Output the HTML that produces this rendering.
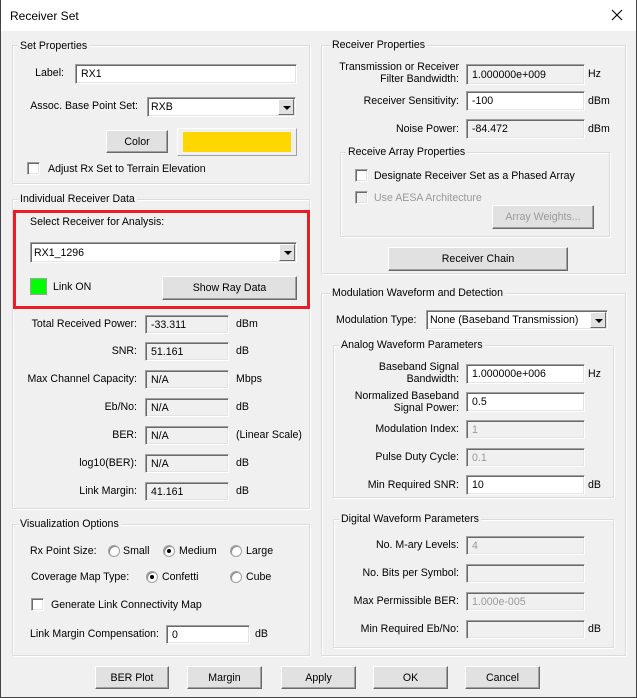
<!DOCTYPE html>
<html><head><style>
*{box-sizing:border-box;margin:0;padding:0}
body{width:637px;height:698px;background:#f0f0f0;font-family:"Liberation Sans",sans-serif;font-size:10.6px;color:#000;position:relative;overflow:hidden}
.frame{position:absolute;left:0;top:0;width:637px;height:698px;border:1px solid #444;border-top:none;pointer-events:none}
.title{position:absolute;left:0;top:0;width:637px;height:31px;background:#fff}
.t{position:absolute;white-space:nowrap;line-height:12px;transform:translateY(-6px)}
.r{position:absolute;white-space:nowrap;line-height:12px;transform:translateY(-6px);text-align:right}
.g{position:absolute;border:1px solid #dcdcdc;box-shadow:inset 1px 1px #fff,1px 1px #fff}
.gl{position:absolute;background:#f0f0f0;padding:0 2px;white-space:nowrap;line-height:12px;transform:translateY(-6px)}
.e{position:absolute;background:#fff;border-top:1px solid #a0a0a0;border-left:1px solid #a0a0a0;border-bottom:1px solid #fff;border-right:1px solid #fff;box-shadow:inset 1px 1px #696969,inset -1px -1px #e3e3e3;padding:0 0 0 5px;display:flex;align-items:center;white-space:nowrap}
.ro{background:#f0f0f0}
.dis{color:#9a9a9a}
.b{position:absolute;background:#e1e1e1;border-top:1px solid #fff;border-left:1px solid #fff;border-right:1px solid #696969;border-bottom:1px solid #696969;box-shadow:inset -1px -1px #a0a0a0;display:flex;align-items:center;justify-content:center;white-space:nowrap}
.cb{position:absolute;width:13px;height:13px;background:#fff;border-top:1px solid #a0a0a0;border-left:1px solid #a0a0a0;border-bottom:1px solid #fff;border-right:1px solid #fff;box-shadow:inset 1px 1px #696969,inset -1px -1px #e3e3e3}
.rd{position:absolute;width:12px;height:12px;border-radius:50%;background:#fff;border:1px solid #a0a0a0;box-shadow:inset 1px 1px #888}
.rd.on::after{content:"";position:absolute;left:3px;top:3px;width:4px;height:4px;border-radius:50%;background:#000}
.dd{position:absolute;right:1px;top:1px;bottom:1px;width:16px;background:#e1e1e1;border-top:1px solid #fff;border-left:1px solid #fff;border-right:1px solid #696969;border-bottom:1px solid #696969}
.dd::after{content:"";position:absolute;left:4px;top:6px;border-left:4px solid transparent;border-right:4px solid transparent;border-top:4px solid #000}
</style></head><body>
<div class="title"></div>
<div class="t" style="left:10px;top:16px;font-size:12px">Receiver Set</div>
<svg style="position:absolute;left:611px;top:9px" width="12" height="12"><path d="M1 1L11 11M11 1L1 11" stroke="#000" stroke-width="1.1"/></svg>

<div class="g" style="left:12px;top:45px;width:298px;height:139px"></div>
<div class="gl" style="left:18px;top:46px">Set Properties</div>
<div class="r" style="right:573px;top:73px">Label:</div>
<div class="e" style="left:75px;top:64px;width:222px;height:20px">RX1</div>
<div class="r" style="right:499px;top:106px">Assoc. Base Point Set:</div>
<div class="e" style="left:147px;top:97px;width:149px;height:20px;padding-left:3px">RXB<div class="dd"></div></div>
<div class="b" style="left:106px;top:130px;width:62px;height:23px">Color</div>
<div class="b" style="left:177px;top:128px;width:120px;height:28px;background:#f0f0f0;border-color:#fff #a0a0a0 #a0a0a0 #fff;box-shadow:none"></div>
<div style="position:absolute;left:183px;top:132px;width:108px;height:20px;background:#ffd700"></div>
<div class="cb" style="left:27px;top:162px"></div>
<div class="t" style="left:48px;top:169px">Adjust Rx Set to Terrain Elevation</div>

<div class="g" style="left:12px;top:199px;width:298px;height:310px"></div>
<div class="gl" style="left:18px;top:199px">Individual Receiver Data</div>
<div style="position:absolute;left:13px;top:210px;width:297px;height:99px;border:3px solid #ed1c24"></div>
<div class="t" style="left:30px;top:222px">Select Receiver for Analysis:</div>
<div class="e" style="left:30px;top:242px;width:267px;height:21px;padding-left:3px">RX1_1296<div class="dd"></div></div>
<div style="position:absolute;left:30px;top:278px;width:17px;height:17px;background:#00ff00;border:1px solid #a0a0a0"></div>
<div class="t" style="left:53px;top:287px">Link ON</div>
<div class="b" style="left:162px;top:276px;width:135px;height:24px">Show Ray Data</div>

<div class="r" style="right:500px;top:324px">Total Received Power:</div>
<div class="e ro" style="left:145px;top:315px;width:84px;height:19px">-33.311</div><div class="t" style="left:236px;top:324px">dBm</div>
<div class="r" style="right:500px;top:351px">SNR:</div>
<div class="e ro" style="left:145px;top:342px;width:84px;height:19px">51.161</div><div class="t" style="left:236px;top:351px">dB</div>
<div class="r" style="right:500px;top:379px">Max Channel Capacity:</div>
<div class="e ro" style="left:145px;top:370px;width:84px;height:19px">N/A</div><div class="t" style="left:236px;top:379px">Mbps</div>
<div class="r" style="right:500px;top:407px">Eb/No:</div>
<div class="e ro" style="left:145px;top:398px;width:84px;height:19px">N/A</div><div class="t" style="left:236px;top:407px">dB</div>
<div class="r" style="right:500px;top:435px">BER:</div>
<div class="e ro" style="left:145px;top:426px;width:84px;height:19px">N/A</div><div class="t" style="left:236px;top:435px">(Linear Scale)</div>
<div class="r" style="right:500px;top:463px">log10(BER):</div>
<div class="e ro" style="left:145px;top:454px;width:84px;height:19px">N/A</div><div class="t" style="left:236px;top:463px">dB</div>
<div class="r" style="right:500px;top:491px">Link Margin:</div>
<div class="e ro" style="left:145px;top:482px;width:84px;height:19px">41.161</div><div class="t" style="left:236px;top:491px">dB</div>

<div class="g" style="left:12px;top:524px;width:298px;height:132px"></div>
<div class="gl" style="left:18px;top:524px">Visualization Options</div>
<div class="t" style="left:30px;top:551px">Rx Point Size:</div>
<div class="rd" style="left:108px;top:545px"></div><div class="t" style="left:123px;top:551px">Small</div>
<div class="rd on" style="left:163px;top:545px"></div><div class="t" style="left:179px;top:551px">Medium</div>
<div class="rd" style="left:230px;top:545px"></div><div class="t" style="left:246px;top:551px">Large</div>
<div class="t" style="left:31px;top:577px">Coverage Map Type:</div>
<div class="rd on" style="left:146px;top:571px"></div><div class="t" style="left:162px;top:577px">Confetti</div>
<div class="rd" style="left:230px;top:571px"></div><div class="t" style="left:246px;top:577px">Cube</div>
<div class="cb" style="left:31px;top:598px"></div>
<div class="t" style="left:51px;top:605px">Generate Link Connectivity Map</div>
<div class="t" style="left:30px;top:634px">Link Margin Compensation:</div>
<div class="e" style="left:166px;top:625px;width:84px;height:19px">0</div><div class="t" style="left:255px;top:634px">dB</div>

<div class="b" style="left:95px;top:666px;width:74px;height:23px">BER Plot</div>
<div class="b" style="left:187px;top:666px;width:75px;height:23px">Margin</div>
<div class="b" style="left:281px;top:666px;width:75px;height:23px">Apply</div>
<div class="b" style="left:373px;top:666px;width:75px;height:23px">OK</div>
<div class="b" style="left:465px;top:666px;width:75px;height:23px">Cancel</div>

<div class="g" style="left:321px;top:45px;width:305px;height:229px"></div>
<div class="gl" style="left:330px;top:45px">Receiver Properties</div>
<div class="r" style="right:178px;top:67px">Transmission or Receiver</div>
<div class="r" style="right:178px;top:79px">Filter Bandwidth:</div>
<div class="e ro" style="left:466px;top:64px;width:119px;height:21px">1.000000e+009</div><div class="t" style="left:588px;top:74px">Hz</div>
<div class="r" style="right:178px;top:101px">Receiver Sensitivity:</div>
<div class="e" style="left:466px;top:91px;width:119px;height:20px">-100</div><div class="t" style="left:588px;top:101px">dBm</div>
<div class="r" style="right:178px;top:129px">Noise Power:</div>
<div class="e ro" style="left:466px;top:119px;width:119px;height:20px">-84.472</div><div class="t" style="left:588px;top:129px">dBm</div>
<div class="g" style="left:340px;top:152px;width:270px;height:85px"></div>
<div class="gl" style="left:346px;top:152px">Receive Array Properties</div>
<div class="cb" style="left:355px;top:169px"></div>
<div class="t" style="left:374px;top:176px">Designate Receiver Set as a Phased Array</div>
<div class="cb" style="left:355px;top:191px;background:#f0f0f0"></div>
<div class="t dis" style="left:374px;top:198px">Use AESA Architecture</div>
<div class="b dis" style="left:492px;top:205px;width:102px;height:24px">Array Weights...</div>
<div class="b" style="left:388px;top:247px;width:180px;height:24px">Receiver Chain</div>

<div class="g" style="left:321px;top:293px;width:305px;height:363px"></div>
<div class="gl" style="left:330px;top:293px">Modulation Waveform and Detection</div>
<div class="t" style="left:336px;top:320px">Modulation Type:</div>
<div class="e" style="left:426px;top:310px;width:182px;height:20px;padding-left:3px">None (Baseband Transmission)<div class="dd"></div></div>
<div class="g" style="left:333px;top:345px;width:281px;height:153px"></div>
<div class="gl" style="left:339px;top:345px">Analog Waveform Parameters</div>
<div class="r" style="right:178px;top:367px">Baseband Signal</div>
<div class="r" style="right:178px;top:379px">Bandwidth:</div>
<div class="e" style="left:466px;top:364px;width:119px;height:20px">1.000000e+006</div><div class="t" style="left:588px;top:374px">Hz</div>
<div class="r" style="right:178px;top:396px">Normalized Baseband</div>
<div class="r" style="right:178px;top:408px">Signal Power:</div>
<div class="e" style="left:466px;top:392px;width:119px;height:20px">0.5</div>
<div class="r" style="right:178px;top:429px">Modulation Index:</div>
<div class="e ro dis" style="left:466px;top:420px;width:119px;height:19px">1</div>
<div class="r" style="right:178px;top:457px">Pulse Duty Cycle:</div>
<div class="e ro dis" style="left:466px;top:448px;width:119px;height:19px">0.1</div>
<div class="r" style="right:178px;top:485px">Min Required SNR:</div>
<div class="e" style="left:466px;top:475px;width:119px;height:20px">10</div><div class="t" style="left:588px;top:485px">dB</div>
<div class="g" style="left:333px;top:519px;width:281px;height:129px"></div>
<div class="gl" style="left:339px;top:519px">Digital Waveform Parameters</div>
<div class="r" style="right:178px;top:545px">No. M-ary Levels:</div>
<div class="e ro dis" style="left:466px;top:536px;width:119px;height:19px">4</div>
<div class="r" style="right:178px;top:573px">No. Bits per Symbol:</div>
<div class="e ro" style="left:466px;top:564px;width:119px;height:19px"></div>
<div class="r" style="right:178px;top:601px">Max Permissible BER:</div>
<div class="e ro dis" style="left:466px;top:592px;width:119px;height:19px">1.000e-005</div>
<div class="r" style="right:178px;top:629px">Min Required Eb/No:</div>
<div class="e ro" style="left:466px;top:620px;width:119px;height:19px"></div><div class="t" style="left:588px;top:629px">dB</div>
<div class="frame"></div>
</body></html>
